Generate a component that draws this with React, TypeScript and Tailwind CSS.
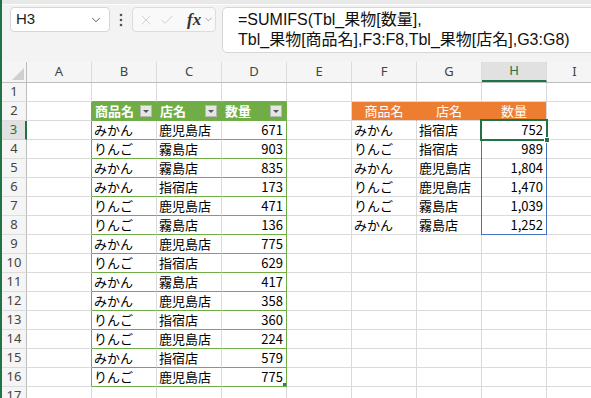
import React from 'react';
import { ChevronDown, X, Check } from 'lucide-react';

const COLS = ['A', 'B', 'C', 'D', 'E', 'F', 'G', 'H', 'I'];

const leftData: [string, string, string][] = [
  ['みかん', '鹿児島店', '671'],
  ['りんご', '霧島店', '903'],
  ['みかん', '霧島店', '835'],
  ['みかん', '指宿店', '173'],
  ['りんご', '鹿児島店', '471'],
  ['りんご', '霧島店', '136'],
  ['みかん', '鹿児島店', '775'],
  ['りんご', '指宿店', '629'],
  ['みかん', '霧島店', '417'],
  ['みかん', '鹿児島店', '358'],
  ['りんご', '指宿店', '360'],
  ['りんご', '鹿児島店', '224'],
  ['みかん', '指宿店', '579'],
  ['りんご', '鹿児島店', '775'],
];

const rightData: [string, string, string][] = [
  ['みかん', '指宿店', '752'],
  ['りんご', '指宿店', '989'],
  ['みかん', '鹿児島店', '1,804'],
  ['りんご', '鹿児島店', '1,470'],
  ['りんご', '霧島店', '1,039'],
  ['みかん', '霧島店', '1,252'],
];

const FilterButton = () => (
  <div className="ml-auto mr-[2px] w-[12px] h-[12px] bg-[#e6e6e6] border border-[#b8b8b8] flex items-center justify-center">
    <div className="w-0 h-0 border-l-[3px] border-r-[3px] border-t-[3px] border-l-transparent border-r-transparent border-t-[#555]" />
  </div>
);

type CellInfo = {
  text?: string;
  right?: boolean;
  center?: boolean;
  kind?: 'green' | 'orange';
  filter?: boolean;
};

function cellAt(r: number, c: number): CellInfo {
  if (r === 2 && c >= 1 && c <= 3) {
    return { text: ['商品名', '店名', '数量'][c - 1], kind: 'green', filter: true };
  }
  if (r >= 3 && r <= 16 && c >= 1 && c <= 3) {
    const row = leftData[r - 3];
    return { text: row[c - 1], right: c === 3 };
  }
  if (r === 2 && c >= 5 && c <= 7) {
    return { text: ['商品名', '店名', '数量'][c - 5], kind: 'orange', center: true };
  }
  if (r >= 3 && r <= 8 && c >= 5 && c <= 7) {
    const row = rightData[r - 3];
    return { text: row[c - 5], right: c === 7 };
  }
  return {};
}

const Cell = ({ r, c }: { r: number; c: number }) => {
  const info = cellAt(r, c);
  const inLeft = r >= 1 && r <= 16 && c >= 1 && c <= 3;
  const greenRight =
    (r >= 2 && r <= 16 && (c === 0 || c === 3)) || (r === 2 && (c === 1 || c === 2));
  const orangeRight = r === 2 && (c === 5 || c === 6);
  const last = c === 8;
  return (
    <div
      className={[
        'h-full border-b flex items-center px-[2px] overflow-hidden whitespace-nowrap text-[13px]',
        last ? 'flex-1' : 'w-[65px] border-r',
        inLeft ? 'border-b-[#70ad47]' : 'border-b-[#dadada]',
        greenRight ? 'border-r-[#70ad47]' : orangeRight ? 'border-r-[#ed7d31]' : 'border-r-[#dadada]',
        info.kind === 'green' ? 'bg-[#70ad47] text-white font-bold pl-[3px]' : '',
        info.kind === 'orange' ? 'bg-[#ed7d31] text-white' : '',
        !info.kind ? 'text-black' : '',
        info.right ? 'justify-end pr-[3px]' : '',
        info.center ? 'justify-center' : '',
      ].join(' ')}
    >
      {info.text && <span>{info.text}</span>}
      {info.filter && <FilterButton />}
    </div>
  );
};

const App: React.FC = () => {
  const rows = Array.from({ length: 17 }, (_, i) => i + 1);
  return (
    <div className="w-[591px] h-[398px] overflow-hidden bg-white flex font-['Noto_Sans_CJK_JP',sans-serif]">
      <div className="w-[2px] h-full bg-[#217346] shrink-0" />
      <div className="flex-1 flex flex-col relative">
        {/* formula bar */}
        <div className="h-[62px] shrink-0 bg-[#f3f3f3] flex flex-col">
          <div className="h-[5px] bg-[#e8e8e8] border-b border-[#fbfbfb]" />
          <div className="flex items-start pl-[8px] pt-[2px]">
            <div className="w-[100px] h-[25px] bg-white border border-[#d6d6d6] rounded-[4px] flex items-center pl-[5px] pr-[6px]">
              <span className="text-[15px] text-[#222] font-['Liberation_Sans',sans-serif]">H3</span>
              <ChevronDown size={14} strokeWidth={1.5} className="ml-auto text-[#444]" />
            </div>
            <div className="w-[22px] h-[25px] flex items-center justify-center">
              <svg width="4" height="14" viewBox="0 0 4 14">
                <circle cx="2" cy="2" r="1.3" fill="#555" />
                <circle cx="2" cy="7" r="1.3" fill="#555" />
                <circle cx="2" cy="12" r="1.3" fill="#555" />
              </svg>
            </div>
            <div className="w-[84px] h-[25px] bg-[#f9f9f9] border border-[#dcdcdc] rounded-[4px] flex items-center pl-[5px]">
              <X size={16} strokeWidth={1.1} className="text-[#c2c2c2]" />
              <Check size={16} strokeWidth={1.1} className="ml-[5px] text-[#c2c2c2]" />
              <span className="ml-[12px] text-[17px] italic font-bold text-[#333] font-['Liberation_Serif',serif] leading-none">fx</span>
              <ChevronDown size={11} strokeWidth={1.5} className="ml-[2px] text-[#888]" />
            </div>
            <div className="ml-[6px] w-[380px] h-[46px] bg-white border border-[#d6d6d6] rounded-[5px] pl-[15px] pt-[2px] text-[16px] leading-[20px] text-[#111] font-['Liberation_Sans','Noto_Sans_CJK_JP',sans-serif] whitespace-nowrap">
              <div>=SUMIFS(Tbl_果物[数量],</div>
              <div>Tbl_果物[商品名],F3:F8,Tbl_果物[店名],G3:G8)</div>
            </div>
          </div>
        </div>

        {/* column headers */}
        <div className="h-[21px] shrink-0 flex bg-[#f5f5f5] border-b border-[#bdbdbd] text-[13px] text-[#444] font-['Noto_Sans',sans-serif]">
          <div className="w-[25px] h-full border-r border-[#bdbdbd] relative">
            <svg width="12" height="12" viewBox="0 0 12 12" className="absolute right-[2px] bottom-[2px]">
              <polygon points="0,12 12,12 12,0" fill="#cfcfcf" />
            </svg>
          </div>
          {COLS.map((col, i) => (
            <div
              key={col}
              className={[
                'h-full flex items-center justify-center',
                i === 8 ? 'flex-1' : 'w-[65px] border-r border-[#dcdcdc]',
                col === 'H' ? 'bg-[#e1e1e1] text-[#217346] border-b-2 border-b-[#217346] mb-[-1px]' : '',
              ].join(' ')}
            >
              {col}
            </div>
          ))}
        </div>

        {/* rows */}
        {rows.map((r) => (
          <div key={r} className="h-[19px] shrink-0 flex">
            <div
              className={[
                'w-[25px] h-full border-b flex items-center justify-center text-[13px] font-["Noto_Sans",sans-serif]',
                r === 3
                  ? 'bg-[#e1e1e1] text-[#217346] border-r-2 border-r-[#217346] border-b-[#d0d0d0]'
                  : 'bg-[#f5f5f5] text-[#444] border-r border-r-[#bdbdbd] border-b-[#dcdcdc]',
              ].join(' ')}
            >
              {r}
            </div>
            {COLS.map((_, c) => (
              <Cell key={c} r={r} c={c} />
            ))}
          </div>
        ))}

        {/* H3:H8 reference range */}
        <div className="absolute left-[479px] top-[120px] w-[66px] h-[115px] border border-[#4472c4] pointer-events-none" />
        {/* active cell H3 */}
        <div className="absolute left-[478px] top-[119px] w-[68px] h-[22px] border-2 border-[#217346] pointer-events-none" />
        <div className="absolute left-[542px] top-[137px] w-[6px] h-[6px] bg-[#217346] border border-white" />
        {/* table resize handle */}
        <div className="absolute left-[281px] top-[383px] w-[3px] h-[3px] bg-[#3a66c4]" />
      </div>
    </div>
  );
};

export default App;
